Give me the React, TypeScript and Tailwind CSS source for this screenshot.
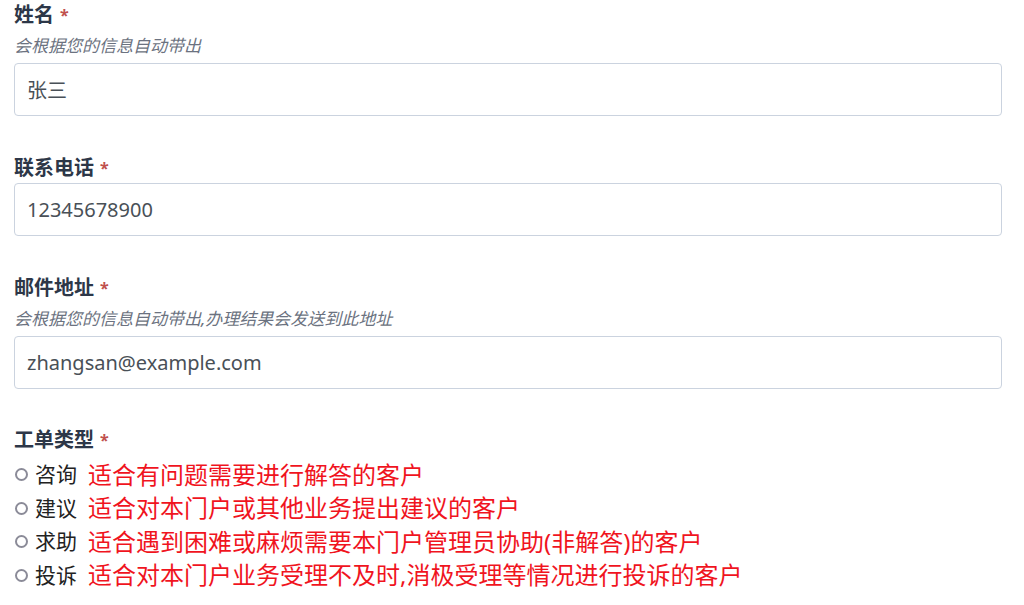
const FONT = "font-['Segoe_UI','Noto_Sans','Noto_Sans_CJK_SC',sans-serif]";

const TYPES = [
  ["咨询", "适合有问题需要进行解答的客户"],
  ["建议", "适合对本门户或其他业务提出建议的客户"],
  ["求助", "适合遇到困难或麻烦需要本门户管理员协助(非解答)的客户"],
  ["投诉", "适合对本门户业务受理不及时,消极受理等情况进行投诉的客户"],
];

function Label({ text }: { text: string }) {
  return (
    <div className="flex h-[30px] items-center text-[20px] font-bold leading-none text-[#2d3748]">
      {text}
      <span className="ml-[6px] text-[16px] text-[#c0504d]">*</span>
    </div>
  );
}

function Hint({ text }: { text: string }) {
  return <div className="flex h-[30px] items-center text-[17px] italic leading-none text-[#6b7280]">{text}</div>;
}

function Field({ value, mt }: { value: string; mt?: string }) {
  return (
    <input
      readOnly
      value={value}
      className={`block h-[53px] w-full rounded-[4px] border border-[#cbd3df] bg-white px-[12px] text-[20px] text-[#495057] outline-none ${mt ?? ""}`}
    />
  );
}

export default function App() {
  return (
    <div className={`${FONT} w-[1024px] bg-white pl-[14px] pr-[22px]`}>
      <Label text="姓名" />
      <Hint text="会根据您的信息自动带出" />
      <Field value="张三" mt="mt-[3px]" />

      <div className="mt-[37px]">
        <Label text="联系电话" />
        <Field value="12345678900" />
      </div>

      <div className="mt-[37px]">
        <Label text="邮件地址" />
        <Hint text="会根据您的信息自动带出,办理结果会发送到此地址" />
        <Field value="zhangsan@example.com" mt="mt-[3px]" />
      </div>

      <div className="mt-[36px]">
        <Label text="工单类型" />
        <div className="mt-[3px]">
          {TYPES.map(([k, d]) => (
            <div key={k} className="flex h-[33.5px] items-center">
              <span className="ml-[1px] h-[13px] w-[13px] rounded-full border-2 border-[#8b8b98] bg-white" />
              <span className="ml-[7px] text-[21px] leading-none text-[#222]">{k}</span>
              <span className="ml-[11px] text-[24px] leading-none text-[#f0141e]">{d}</span>
            </div>
          ))}
        </div>
      </div>
    </div>
  );
}
